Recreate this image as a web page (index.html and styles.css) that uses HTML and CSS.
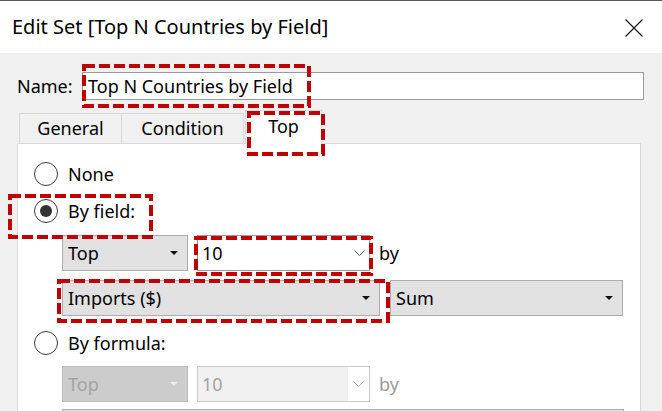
FILE: index.html
```html
<!DOCTYPE html>
<html>
<head>
<meta charset="utf-8">
<link rel="stylesheet" href="styles.css">
</head>
<body>
<div class="window">
  <div class="titlebar">
    <span class="title">Edit Set [Top N Countries by Field]</span>
    <svg class="close" width="20" height="20" viewBox="0 0 20 20"><path d="M1.5 1.5L18.5 18.5M18.5 1.5L1.5 18.5" stroke="#1a1a1a" stroke-width="1.2" fill="none"/></svg>
  </div>
  <div class="content">
    <div class="name-row">
      <span class="label">Name:</span>
      <div class="textbox">Top N Countries by Field</div>
    </div>
    <div class="tabs">
      <div class="tab tab-general">General</div>
      <div class="tab tab-condition">Condition</div>
      <div class="tab tab-top active">Top</div>
    </div>
    <div class="panel">
      <div class="radio-row"><span class="radio"></span><span>None</span></div>
      <div class="radio-row row-field"><span class="radio checked"></span><span>By field:</span></div>
      <div class="ctrl-row row-a">
        <div class="select w-top"><span>Top</span><i class="tri"></i></div>
        <div class="combo"><span>10</span><svg class="chev" width="11" height="6" viewBox="0 0 11 6"><path d="M0.5 0.5L5.5 5.5L10.5 0.5" stroke="#555" stroke-width="1" fill="none"/></svg></div>
        <span class="by">by</span>
      </div>
      <div class="ctrl-row row-b">
        <div class="select w-field"><span>Imports ($)</span><i class="tri"></i></div>
        <div class="select w-agg"><span>Sum</span><i class="tri"></i></div>
      </div>
      <div class="radio-row row-formula"><span class="radio"></span><span>By formula:</span></div>
      <div class="ctrl-row row-c disabled">
        <div class="select w-top"><span>Top</span><i class="tri"></i></div>
        <div class="combo"><span class="combo-text">10</span><span class="combo-btn"><svg class="chev" width="11" height="6" viewBox="0 0 11 6"><path d="M0.5 0.5L5.5 5.5L10.5 0.5" stroke="#bbb" stroke-width="1" fill="none"/></svg></span></div>
        <span class="by">by</span>
      </div>
      <div class="ctrl-row row-d">
        <div class="select w-wide"></div>
      </div>
    </div>
  </div>
  <div class="mark m-name"><svg><rect x="2" y="2"/></svg></div>
  <div class="mark m-tab"><svg><rect x="2" y="2"/></svg></div>
  <div class="mark m-field"><svg><rect x="2" y="2"/></svg></div>
  <div class="mark m-count"><svg><rect x="2" y="2"/></svg></div>
  <div class="mark m-measure"><svg><rect x="2" y="2"/></svg></div>
</div>
</body>
</html>
```
FILE: styles.css
```css
* { box-sizing: border-box; }
html, body { margin: 0; padding: 0; }
body {
  font-family: "Noto Sans", "Open Sans", sans-serif;
  font-size: 18px;
  color: #000;
  background: #f0f0f0;
}
.window {
  position: relative;
  width: 662px;
  height: 411px;
  overflow: hidden;
  background: #f0f0f0;
  border-top: 1px solid #5a5a5a;
}
.titlebar {
  height: 52px;
  background: #fff;
  display: flex;
  align-items: center;
  justify-content: space-between;
  padding: 0 18px 0 12px;
}
.title { font-size: 20px; line-height: 1; }
.close { display: block; margin-top: 1px; }

.content { padding: 19px 18px 0 17px; }
.name-row { display: flex; align-items: center; height: 28px; }
.label { width: 65px; line-height: 1; }
.textbox {
  flex: 1;
  height: 28px;
  border: 1px solid #9a9a9a;
  background: #fff;
  padding-left: 5px;
  display: flex;
  align-items: center;
  line-height: 1;
}

.tabs {
  display: flex;
  align-items: flex-end;
  margin-top: 13px;
  margin-left: 2px;
  height: 30px;
  position: relative;
  z-index: 2;
}
.tab {
  height: 30px;
  border: 1px solid #d9d9d9;
  border-bottom: none;
  background: #f0f0f0;
  display: flex;
  align-items: center;
  justify-content: center;
  line-height: 1;
  padding-bottom: 1px;
}
.tab-general { width: 103px; }
.tab-condition { width: 123px; margin-left: -1px; }
.tab-top { width: 77px; margin-left: 1px; }
.tab.active {
  height: 34px;
  margin-bottom: -1px;
  background: #fff;
  padding-bottom: 4px;
}

.panel {
  margin-right: 3px;
  height: 300px;
  background: #fff;
  border: 1px solid #d9d9d9;
  padding: 13px 0 0 16px;
}
.radio-row {
  display: flex;
  align-items: center;
  gap: 10px;
  height: 34px;
  line-height: 1;
}
.row-field { margin-top: 3px; }
.row-formula { margin-top: 10px; }
.radio {
  width: 24px;
  height: 24px;
  border-radius: 50%;
  border: 1.5px solid #3c3c3c;
  background: #fff;
  display: flex;
  align-items: center;
  justify-content: center;
}
.radio.checked::after {
  content: "";
  width: 12px;
  height: 12px;
  border-radius: 50%;
  background: #333;
}

.ctrl-row {
  display: flex;
  align-items: center;
  gap: 9px;
  margin-left: 28px;
  height: 36px;
  line-height: 1;
}
.row-a { margin-top: 7px; }
.row-b { margin-top: 9px; gap: 10px; }
.row-c { margin-top: 6px; }
.row-d { margin-top: 7px; }

.select {
  height: 36px;
  background: #e1e1e1;
  border: 1px solid #adadad;
  padding: 0 9px 0 5px;
  display: flex;
  align-items: center;
  justify-content: space-between;
}
.w-top { width: 126px; }
.w-field { width: 318px; }
.w-agg { width: 233px; }
.w-wide { width: 562px; }
.tri {
  width: 0;
  height: 0;
  border-left: 4px solid transparent;
  border-right: 4px solid transparent;
  border-top: 4px solid #111;
}
.combo {
  width: 173px;
  height: 36px;
  background: #fff;
  border: 1px solid #9a9a9a;
  padding: 0 4px 0 4px;
  display: flex;
  align-items: center;
  justify-content: space-between;
}
.chev { display: block; }
.by { margin-left: 0; }

.disabled .select { background: #cccccc; border-color: #bfbfbf; color: #a3a3a3; }
.disabled .tri { border-top-color: #ececec; }
.disabled .combo {
  border-color: #cccccc;
  background: #fff;
  padding: 0;
  color: #a3a3a3;
}
.disabled .combo-text {
  flex: 1;
  height: 100%;
  background: #f0f0f0;
  display: flex;
  align-items: center;
  padding-left: 4px;
}
.disabled .combo-btn {
  width: 21px;
  height: 100%;
  display: flex;
  align-items: center;
  justify-content: flex-start;
  padding-left: 5px;
}
.disabled .by { color: #9a9a9a; }

.mark { position: absolute; z-index: 5; }
.mark svg { display: block; width: 100%; height: 100%; overflow: visible; }
.mark rect {
  width: calc(100% - 4px);
  height: calc(100% - 4px);
  fill: none;
  stroke: #c00000;
  stroke-width: 4;
  stroke-dasharray: 11 4;
}
.m-name { left: 82px; top: 63px; width: 229px; height: 44px; }
.m-tab { left: 247px; top: 110px; width: 78px; height: 45px; }
.m-field { left: 8px; top: 193px; width: 145px; height: 45px; }
.m-count { left: 194px; top: 235px; width: 179px; height: 40px; }
.m-measure { left: 57px; top: 278px; width: 333px; height: 44px; }
```
